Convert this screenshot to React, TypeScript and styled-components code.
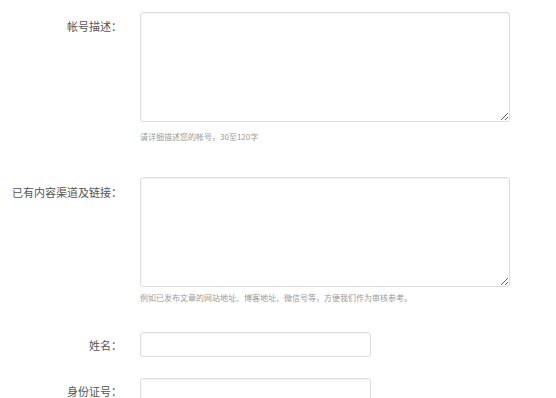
import styled, { createGlobalStyle } from "styled-components";

const GlobalStyle = createGlobalStyle`
  html, body {
    margin: 0;
    padding: 0;
    background: #fff;
    overflow: hidden;
  }
  body {
    font-family: "Noto Sans CJK SC", "Noto Sans", sans-serif;
  }
`;

const Form = styled.form`
  display: flex;
  flex-direction: column;
  width: 556px;
`;

const Row = styled.div<{ $top: number; $center?: boolean }>`
  display: grid;
  grid-template-columns: 122px 1fr;
  column-gap: 18px;
  align-items: ${(p) => (p.$center ? "center" : "start")};
  margin-top: ${(p) => p.$top}px;
`;

const Label = styled.label<{ $pad?: number }>`
  text-align: right;
  font-size: 11px;
  line-height: 14px;
  color: #555;
  padding-top: ${(p) => p.$pad ?? 0}px;
  white-space: nowrap;
`;

const Field = styled.div`
  display: flex;
  flex-direction: column;
`;

const TextArea = styled.textarea`
  display: block;
  box-sizing: border-box;
  width: 370px;
  height: 110px;
  margin: 0;
  border: 1px solid #dcdcdc;
  border-radius: 3px;
  box-shadow: inset 0 1px 2px rgba(0, 0, 0, 0.04);
  background: #fff;
  font-family: inherit;
  font-size: 12px;
  outline: none;
`;

const Input = styled.input`
  display: block;
  box-sizing: border-box;
  width: 231px;
  height: 25px;
  margin: 0;
  border: 1px solid #dcdcdc;
  border-radius: 3px;
  box-shadow: inset 0 1px 2px rgba(0, 0, 0, 0.04);
  background: #fff;
  font-family: inherit;
  font-size: 12px;
  outline: none;
`;

const Hint = styled.p<{ $top: number }>`
  margin: ${(p) => p.$top}px 0 0;
  font-size: 8px;
  line-height: 10px;
  color: #9a9a9a;
  white-space: nowrap;
`;

export default function App() {
  return (
    <>
      <GlobalStyle />
      <Form>
        <Row $top={12}>
          <Label $pad={7}>帐号描述：</Label>
          <Field>
            <TextArea />
            <Hint $top={10}>请详细描述您的帐号，30至120字</Hint>
          </Field>
        </Row>
        <Row $top={35}>
          <Label $pad={8}>已有内容渠道及链接：</Label>
          <Field>
            <TextArea />
            <Hint $top={6}>
              例如已发布文章的网站地址、博客地址、微信号等，方便我们作为审核参考。
            </Hint>
          </Field>
        </Row>
        <Row $top={29} $center>
          <Label>姓名：</Label>
          <Input />
        </Row>
        <Row $top={21} $center>
          <Label>身份证号：</Label>
          <Input />
        </Row>
      </Form>
    </>
  );
}
